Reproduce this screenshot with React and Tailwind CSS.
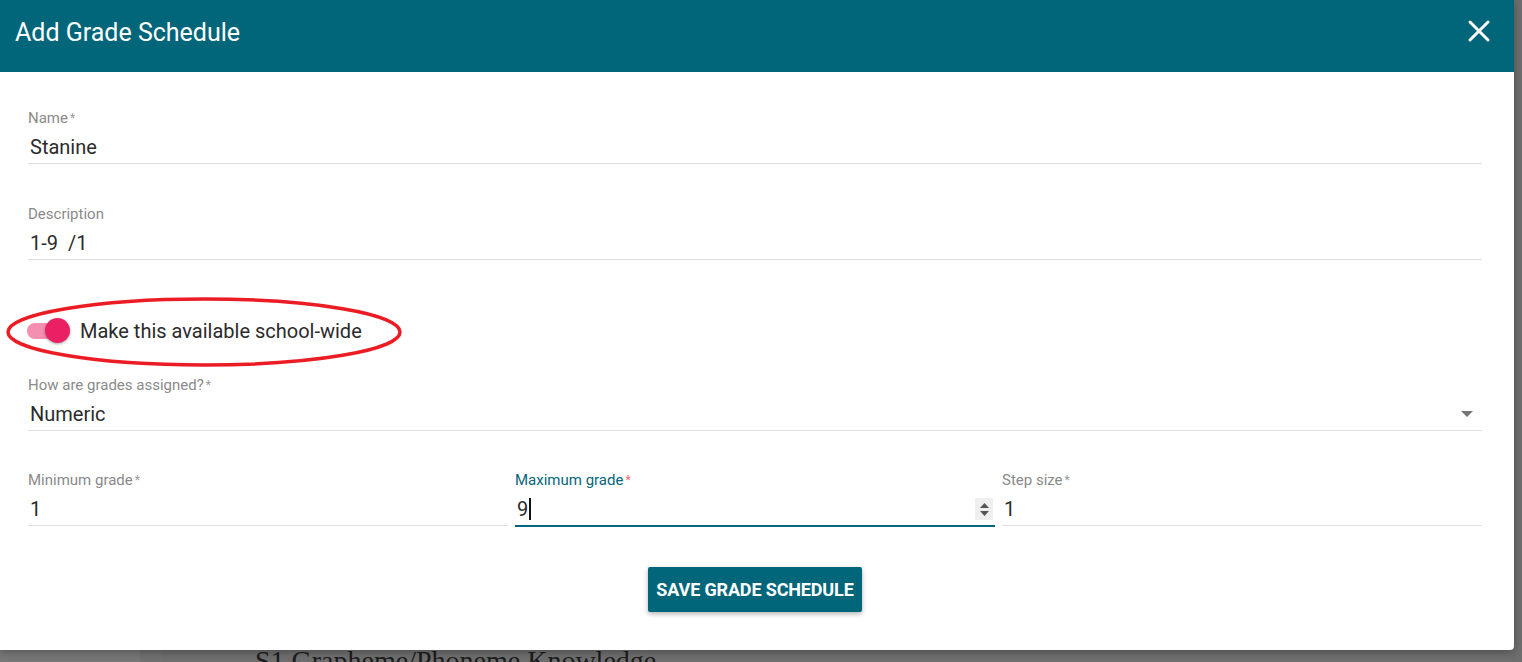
import { X } from 'lucide-react';

const font = { fontFamily: 'Roboto, "Noto Sans", Arial, sans-serif' };

function Label({ children, active }) {
  return (
    <div className={'h-4 leading-4 text-[15px] ' + (active ? 'text-[#05667b]' : 'text-[#8a8a8a]')}>
      {children}
      <span className={'ml-[2px] text-[12px] align-top ' + (active ? 'text-[#f26b6b]' : 'text-[#9a9a9a]')}>*</span>
    </div>
  );
}

function Field({ label, value, required = true, active, right }) {
  return (
    <div className={'pb-[3px] ' + (active ? 'border-b-2 border-[#05667b]' : 'border-b border-[#e0e0e0]')}>
      {required ? (
        <Label active={active}>{label}</Label>
      ) : (
        <div className="h-4 leading-4 text-[15px] text-[#8a8a8a]">{label}</div>
      )}
      <div className="mt-[8px] h-[26px] flex items-center">
        <span className="pl-[2px] text-[20px] leading-[26px] text-[#2b2b2b] whitespace-pre">{value}</span>
        {active && <span className="ml-[1px] w-[1.5px] h-[22px] bg-[#111]" />}
        <div className="flex-1" />
        {right}
      </div>
    </div>
  );
}

function Spinner() {
  return (
    <div className="w-[18px] h-[22px] bg-[#efefef] flex flex-col items-center justify-center gap-[3px] mr-[2px]">
      <svg width="9" height="5" viewBox="0 0 9 5"><path d="M4.5 0L9 5H0z" fill="#555" /></svg>
      <svg width="9" height="5" viewBox="0 0 9 5"><path d="M0 0h9L4.5 5z" fill="#555" /></svg>
    </div>
  );
}

function Toggle() {
  return (
    <div className="relative w-[46px] h-[26px] flex items-center">
      <div className="ml-[1px] w-[34px] h-[16px] rounded-full bg-[#f48fb1]" />
      <div className="absolute left-[19px] top-0 w-[25px] h-[25px] rounded-full bg-[#eb1f63] shadow-[0_1px_3px_rgba(0,0,0,0.35)]" />
    </div>
  );
}

export default function App() {
  return (
    <div className="relative w-[1522px] h-[662px] overflow-hidden bg-[#6e6e6e]" style={font}>
      {/* page behind the modal */}
      <div className="flex h-full">
        <div className="w-[140px] bg-[#777777]" />
        <div className="w-[22px] bg-[#707070]" />
        <div className="flex-1 pt-[647px] pl-[93px]">
          <div className="text-[28px] leading-none text-[#1c1c1c] whitespace-nowrap" style={{ fontFamily: '"Liberation Serif", serif' }}>
            S1 Grapheme/Phoneme Knowledge
          </div>
        </div>
      </div>

      {/* modal */}
      <div className="absolute top-0 left-0 w-[1514px] h-[650px] bg-white rounded-br-[4px] shadow-[0_2px_8px_rgba(0,0,0,0.3)] flex flex-col">
        <div className="h-[72px] bg-[#02667b] flex items-start justify-between pl-[15px] pr-[17px]">
          <h1 className="mt-[20px] text-[25px] text-white font-normal leading-none">Add Grade Schedule</h1>
          <X className="mt-[13px]" size={36} strokeWidth={2} color="white" />
        </div>

        <div className="pl-[28px] pr-[32px] pt-[38px] flex flex-col">
          <Field label="Name" value="Stanine" />
          <div className="mt-[42px]">
            <Field label="Description" value="1-9  /1" required={false} />
          </div>

          <div className="relative mt-[51px] h-[40px] flex items-center -ml-[2px]">
            <Toggle />
            <span className="ml-[8px] text-[20px] text-[#2b2b2b]">Make this available school-wide</span>
            <svg className="absolute -left-[26px] -top-[16px]" width="420" height="74" viewBox="0 0 420 74">
              <ellipse cx="204" cy="37" rx="196" ry="33" fill="none" stroke="#ec1c24" strokeWidth="3.5" />
            </svg>
          </div>

          <div className="mt-[26px]">
            <Field
              label="How are grades assigned?"
              value="Numeric"
              right={
                <svg className="mr-[9px]" width="12" height="6" viewBox="0 0 12 6"><path d="M0 0h12L6 6z" fill="#757575" /></svg>
              }
            />
          </div>

          <div className="mt-[41px] grid grid-cols-3 gap-x-[7px] items-start">
            <Field label="Minimum grade" value="1" />
            <Field label="Maximum grade" value="9" active right={<Spinner />} />
            <Field label="Step size" value="1" />
          </div>

          <div className="mt-[40px] flex justify-center">
            <button className="h-[45px] px-[8px] rounded-[2px] bg-[#02667b] text-white text-[18px] font-bold tracking-[-0.15px] shadow-[0_2px_5px_rgba(0,0,0,0.3)]">
              SAVE GRADE SCHEDULE
            </button>
          </div>
        </div>
      </div>
    </div>
  );
}
